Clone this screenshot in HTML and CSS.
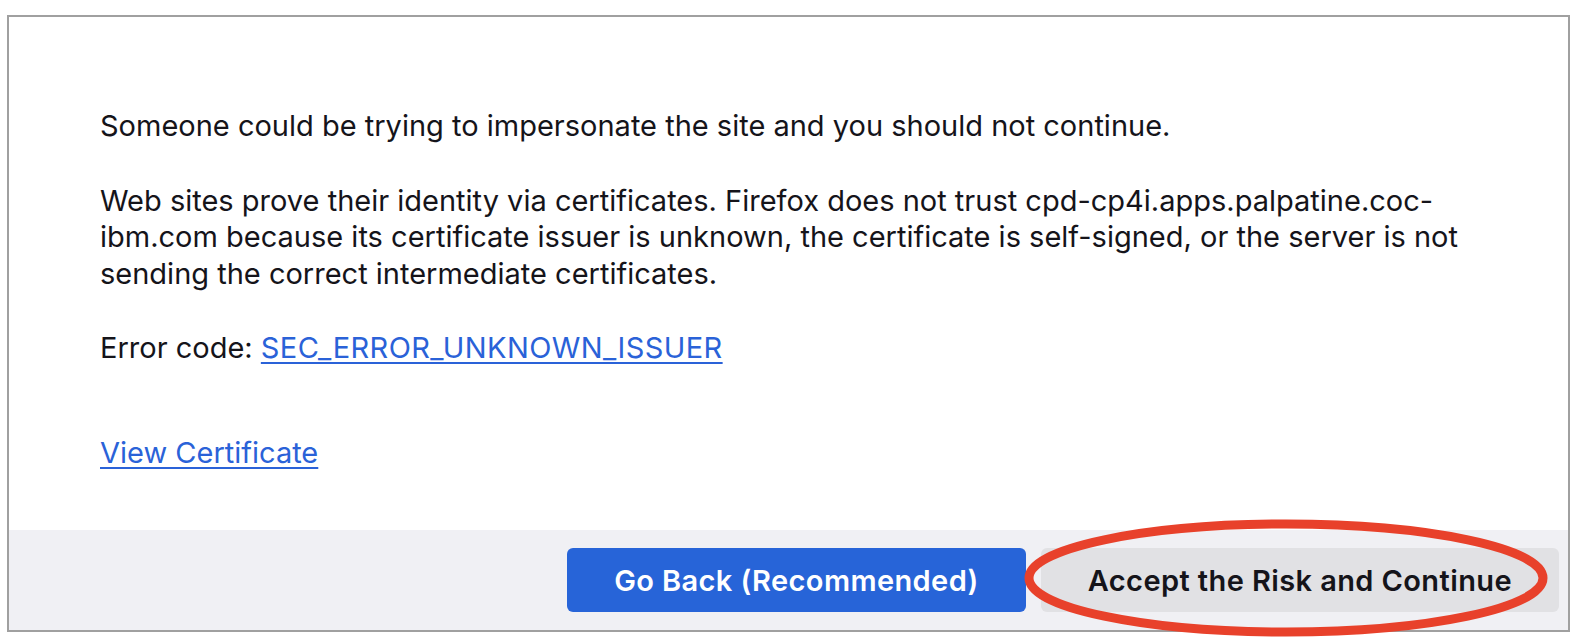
FILE: index.html
```html
<!DOCTYPE html>
<html lang="en">
<head>
<meta charset="utf-8">
<title>Warning: Potential Security Risk Ahead</title>
<link rel="stylesheet" href="styles.css">
</head>
<body>
  <div class="frame">
    <div class="content">
      <p class="para">Someone could be trying to impersonate the site and you should not continue.</p>
      <p class="para">Web sites prove their identity via certificates. Firefox does not trust cpd-cp4i.apps.palpatine.coc-ibm.com because its certificate issuer is unknown, the certificate is self-signed, or the server is not sending the correct intermediate certificates.</p>
      <p class="para">Error code: <a class="link link-code" href="#">SEC_ERROR_UNKNOWN_ISSUER</a></p>
      <p class="para para-cert"><a class="link" href="#">View Certificate</a></p>
    </div>
    <div class="footer">
      <button class="btn btn-primary">Go Back (Recommended)</button>
      <button class="btn btn-secondary">Accept the Risk and Continue</button>
    </div>
  </div>
  <svg class="annotation" width="540" height="130" viewBox="0 0 540 130">
    <ellipse cx="266" cy="63" rx="257" ry="54" fill="none" stroke="#e8412b" stroke-width="9"/>
  </svg>
</body>
</html>
```

FILE: styles.css
```css
html, body {
  margin: 0;
  padding: 0;
  background: #ffffff;
}

body {
  font-family: Inter, "Noto Sans", "Liberation Sans", sans-serif;
  color: #15141a;
  position: relative;
  width: 1590px;
  height: 642px;
  overflow: hidden;
}

.frame {
  box-sizing: border-box;
  margin: 15px 0 0 7px;
  width: 1563px;
  height: 617px;
  border: 2px solid #a0a0a0;
  display: flex;
  flex-direction: column;
  background: #ffffff;
}

.content {
  flex: 1;
  padding: 91px 0 0 91px;
  width: 1380px;
}

.para {
  margin: 0 0 38px 0;
  font-size: 29px;
  line-height: 36.5px;
}

.para-cert {
  margin-top: 68px;
}

.link {
  color: #2a62d8;
  text-decoration: underline;
  text-underline-offset: 4px;
  text-decoration-thickness: 2px;
}

.link-code {
  letter-spacing: 0.4px;
}

.footer {
  height: 100px;
  box-sizing: border-box;
  background: #f0f0f4;
  display: flex;
  justify-content: flex-end;
  align-items: center;
  gap: 15px;
  padding: 0 9px 0 0;
}

.btn {
  height: 64px;
  padding: 0 47px;
  border: none;
  border-radius: 6px;
  font-family: Inter, "Noto Sans", "Liberation Sans", sans-serif;
  font-size: 29px;
  font-weight: 600;
  letter-spacing: 0.4px;
}

.btn-primary {
  background: #2764d8;
  color: #ffffff;
}

.btn-secondary {
  background: #e1e1e4;
  color: #15141a;
}

.annotation {
  position: absolute;
  left: 1020px;
  top: 515px;
}
```
